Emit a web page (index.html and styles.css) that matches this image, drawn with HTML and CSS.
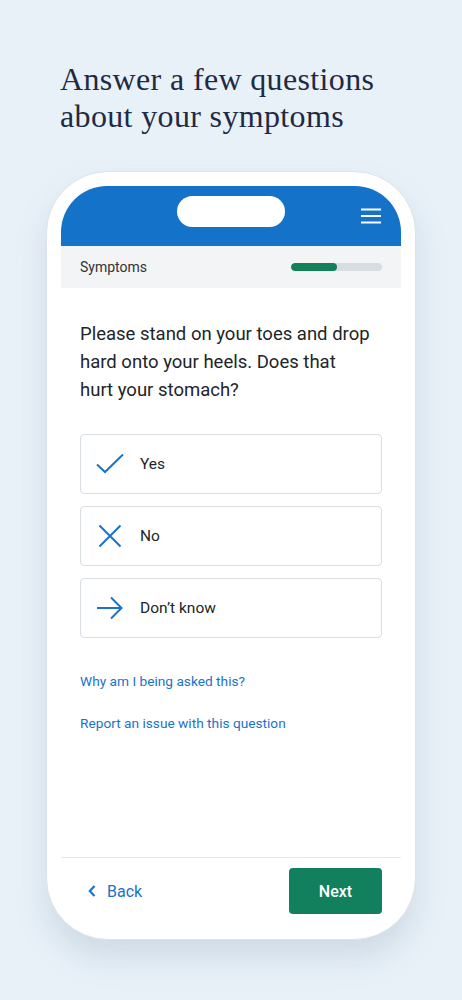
FILE: index.html
```html
<!DOCTYPE html>
<html lang="en">
<head>
<meta charset="utf-8">
<title>Symptoms</title>
<link rel="stylesheet" href="styles.css">
</head>
<body>
<main class="page">
  <h1 class="headline">Answer a few questions about your symptoms</h1>
  <div class="phone">
    <div class="screen">
      <header class="topbar">
        <div class="pill"></div>
        <svg class="menu" width="20" height="16" viewBox="0 0 20 16" aria-hidden="true">
          <path d="M0 1.5H20M0 8H20M0 14.5H20" stroke="#fff" stroke-width="2" fill="none"/>
        </svg>
      </header>
      <div class="subbar">
        <span class="section">Symptoms</span>
        <div class="progress"><div class="progress-fill" style="width:50%"></div></div>
      </div>
      <div class="content">
        <p class="question">Please stand on your toes and drop hard onto your heels. Does that hurt&nbsp;your stomach?</p>
        <div class="options">
          <div class="option">
            <svg class="opt-icon" width="28" height="28" viewBox="0 0 28 28" aria-hidden="true">
              <path d="M1 14.5L9 22L27 4.5" stroke="#1a73c8" stroke-width="2" fill="none"/>
            </svg>
            <span>Yes</span>
          </div>
          <div class="option">
            <svg class="opt-icon" width="28" height="28" viewBox="0 0 28 28" aria-hidden="true">
              <path d="M3.5 3.5L24.5 24.5M24.5 3.5L3.5 24.5" stroke="#1a73c8" stroke-width="2" fill="none"/>
            </svg>
            <span>No</span>
          </div>
          <div class="option">
            <svg class="opt-icon" width="28" height="28" viewBox="0 0 28 28" aria-hidden="true">
              <path d="M1 14H25M15 3.5L25.5 14L15 24.5" stroke="#1a73c8" stroke-width="2" fill="none"/>
            </svg>
            <span>Don’t know</span>
          </div>
        </div>
        <a class="link first" href="#">Why am I being asked this?</a>
        <a class="link" href="#">Report an issue with this question</a>
      </div>
      <footer class="footer">
        <a class="back" href="#">
          <svg width="8" height="12" viewBox="0 0 8 12" aria-hidden="true">
            <path d="M6.5 1L1.8 6L6.5 11" stroke="#1a73c8" stroke-width="2.2" fill="none"/>
          </svg>
          <span>Back</span>
        </a>
        <button class="next" type="button">Next</button>
      </footer>
    </div>
  </div>
</main>
</body>
</html>
```

FILE: styles.css
```css
* { box-sizing: border-box; }
html, body { margin: 0; padding: 0; }
body {
  background: #e8f1f8;
  font-family: Roboto, "Noto Sans", Arial, sans-serif;
  width: 462px;
  height: 1000px;
  overflow: hidden;
}
.page {
  padding-top: 61px;
}
.headline {
  margin: 0 0 36px 60px;
  width: 360px;
  font-family: "Liberation Serif", "Times New Roman", serif;
  font-weight: 400;
  font-size: 32px;
  letter-spacing: 0.35px;
  line-height: 37px;
  color: #1f2a44;
}
.phone {
  margin-left: 46px;
  width: 370px;
  height: 769px;
  background: #fff;
  border: 1px solid #dde3e9;
  border-radius: 62px;
  padding: 14px;
  box-shadow: 0 18px 30px rgba(120, 140, 165, 0.22);
}
.screen {
  height: 100%;
  display: flex;
  flex-direction: column;
}
.topbar {
  height: 60px;
  background: #1472c8;
  border-radius: 46px 46px 0 0;
  display: flex;
  align-items: flex-start;
  justify-content: center;
  position: relative;
  padding-top: 10px;
}
.pill {
  width: 108px;
  height: 31px;
  background: #fff;
  border-radius: 16px;
}
.menu {
  position: absolute;
  right: 20px;
  top: 22px;
}
.subbar {
  height: 42px;
  background: #f3f4f6;
  display: flex;
  align-items: center;
  justify-content: space-between;
  padding: 0 19px;
}
.section {
  font-size: 14px;
  color: #2f3338;
}
.progress {
  width: 91px;
  height: 8px;
  border-radius: 4px;
  background: #d8dde1;
  overflow: hidden;
}
.progress-fill {
  height: 100%;
  background: #148057;
  border-radius: 4px;
}
.content {
  flex: 1;
  padding: 32px 19px 0 19px;
  display: flex;
  flex-direction: column;
  align-items: flex-start;
}
.question {
  margin: 0;
  font-size: 18.5px;
  line-height: 28px;
  color: #212529;
}
.options {
  margin-top: 30px;
  width: 302px;
  display: flex;
  flex-direction: column;
  gap: 12px;
}
.option {
  height: 60px;
  border: 1px solid #d9dee4;
  border-radius: 4px;
  display: flex;
  align-items: center;
  padding-left: 15px;
  gap: 16px;
  font-size: 15.5px;
  color: #212529;
}
.opt-icon { flex: none; }
.link {
  font-size: 13.7px;
  line-height: 20px;
  color: #1a73c8;
  text-decoration: none;
  margin-top: 22px;
}
.link.first { margin-top: 33px; }
.footer {
  height: 68px;
  border-top: 1px solid #e6e8eb;
  display: flex;
  align-items: flex-start;
  justify-content: space-between;
  padding: 10px 19px 0 27px;
}
.back {
  display: flex;
  align-items: center;
  gap: 11px;
  height: 46px;
  color: #1a73c8;
  text-decoration: none;
  font-size: 16px;
}
.next {
  width: 93px;
  height: 46px;
  background: #12805c;
  color: #fff;
  border: none;
  border-radius: 4px;
  font-family: Roboto, "Noto Sans", Arial, sans-serif;
  font-size: 16px;
  font-weight: 500;
}
```
